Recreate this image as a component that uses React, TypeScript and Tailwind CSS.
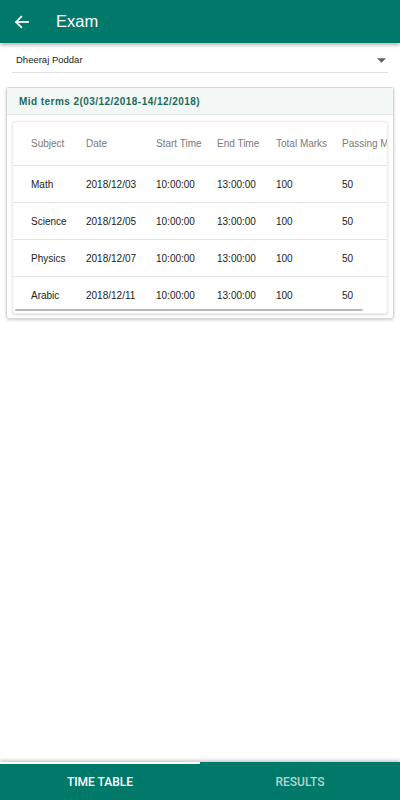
import React from "react";

const ROWS = [
  { subject: "Math", date: "2018/12/03" },
  { subject: "Science", date: "2018/12/05" },
  { subject: "Physics", date: "2018/12/07" },
  { subject: "Arabic", date: "2018/12/11" },
];

const COLS = ["w-[73px] pl-[18px]", "w-[70px]", "w-[61px]", "w-[59px]", "w-[66px]", "w-[90px]"];

export default function App() {
  return (
    <div
      className="h-[800px] w-[400px] flex flex-col bg-white overflow-hidden"
      style={{ fontFamily: "'Liberation Sans', Arial, sans-serif" }}
    >
      {/* App bar */}
      <header className="h-[43px] shrink-0 bg-[#00796b] flex items-center shadow-[0_2px_4px_rgba(0,0,0,0.3)] z-10">
        <svg className="ml-[14px] w-[16px] h-[16px]" viewBox="0 0 24 24" fill="none" stroke="white" strokeWidth="2.6" strokeLinecap="square">
          <path d="M21 12H4" />
          <path d="M11 4l-8 8 8 8" />
        </svg>
        <h1 className="ml-[26px] text-white text-[16.5px] leading-none">Exam</h1>
      </header>

      <main className="flex-1 flex flex-col">
        {/* Student select */}
        <div className="mx-3 h-[30px] border-b border-[#e0e0e0] flex items-center justify-between pt-[6px]">
          <span className="pl-1 text-[9.5px] text-[#212121]">Dheeraj Poddar</span>
          <svg className="w-[9px] h-[5px] mr-[2px]" viewBox="0 0 10 5">
            <path d="M0 0h10L5 5z" fill="#616161" />
          </svg>
        </div>

        {/* Exam card */}
        <section className="mx-[6px] mt-[14px] border border-[#d6d6d6] rounded-[3px] shadow-[0_1px_3px_rgba(0,0,0,0.2)]">
          <div className="h-[27px] bg-[#f3f7f6] border-b border-[#dfe4e3] flex items-center pl-3">
            <span className="text-[10px] font-bold tracking-[0.45px] text-[#1b6b5c]">
              Mid terms 2(03/12/2018-14/12/2018)
            </span>
          </div>
          <div className="p-[5px] pt-[6px] pb-[4px]">
            <div className="relative overflow-hidden bg-white rounded-[3px] border border-[#ececec] shadow-[0_1px_2px_rgba(0,0,0,0.15)]">
              <div className="w-[420px]">
                <div className="h-[43px] flex items-center text-[10px] text-[#7a7a7a]">
                  <div className={COLS[0]}>Subject</div>
                  <div className={COLS[1]}>Date</div>
                  <div className={COLS[2]}>Start Time</div>
                  <div className={COLS[3]}>End Time</div>
                  <div className={COLS[4]}>Total Marks</div>
                  <div className={COLS[5]}>Passing Marks</div>
                </div>
                {ROWS.map((r) => (
                  <div key={r.subject} className="h-[37px] flex items-center border-t border-[#e3e3e3] text-[10px] text-[#212121]">
                    <div className={COLS[0]}>{r.subject}</div>
                    <div className={COLS[1]}>{r.date}</div>
                    <div className={COLS[2]}>10:00:00</div>
                    <div className={COLS[3]}>13:00:00</div>
                    <div className={COLS[4]}>100</div>
                    <div className={COLS[5]}>50</div>
                  </div>
                ))}
              </div>
              {/* horizontal scroll indicator */}
              <div className="absolute left-[2px] bottom-[2px] w-[348px] h-[2px] bg-[#b8b8b8] rounded-full" />
            </div>
          </div>
        </section>
      </main>

      {/* Bottom tabs */}
      <nav
        className="h-[38px] shrink-0 bg-[#00796b] flex relative shadow-[0_-2px_3px_rgba(0,0,0,0.2)]"
        style={{ fontFamily: "Roboto, 'Liberation Sans', sans-serif" }}
      >
        <div className="absolute top-0 left-0 w-[200px] h-[2px] bg-white" />
        <button className="flex-1 flex items-center justify-center pt-[2px] text-white text-[12px] font-medium">
          TIME TABLE
        </button>
        <button className="flex-1 flex items-center justify-center pt-[2px] text-white/70 text-[12px] font-medium">
          RESULTS
        </button>
      </nav>
    </div>
  );
}
